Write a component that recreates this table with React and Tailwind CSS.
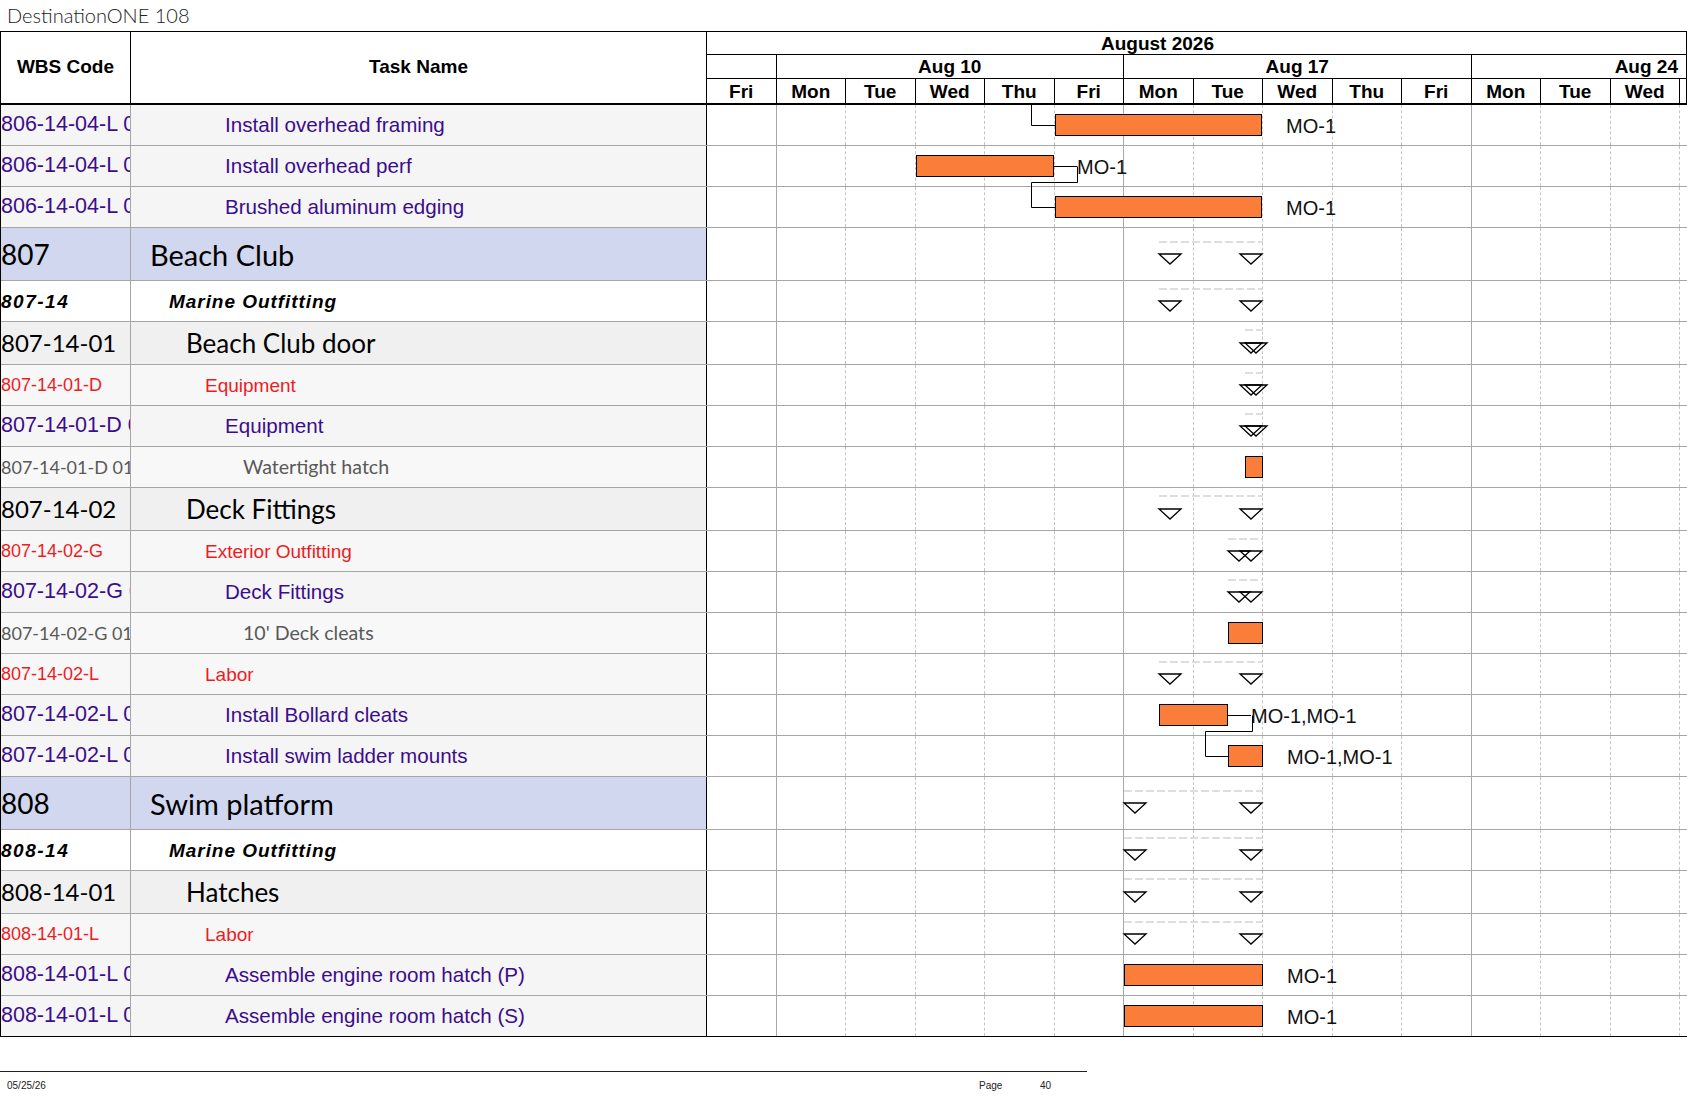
import React from 'react';

const DAYS = ['Fri', 'Mon', 'Tue', 'Wed', 'Thu', 'Fri', 'Mon', 'Tue', 'Wed', 'Thu', 'Fri', 'Mon', 'Tue', 'Wed'];
const WEEK_END = [0, 5, 10];

const LEVEL = {
  1: {
    row: 'h-[53px] bg-[#d0d7ee]',
    wbs: "font-['Lato'] text-[28px] text-black",
    name: "pl-[19px] font-['Lato'] text-[29px] text-black",
  },
  2: {
    row: 'h-[41px] bg-white',
    wbs: "font-['Liberation_Sans'] font-bold italic text-[19px] tracking-[0.08em] text-black",
    name: "pl-[38px] font-['Liberation_Sans'] font-bold italic text-[19px] tracking-[0.05em] text-black",
  },
  3: {
    row: 'h-[43px] bg-[#f0f0f0]',
    wbs: "font-['Lato'] text-[24px] text-black",
    name: "pl-[55px] font-['Lato'] text-[26px] text-black",
  },
  4: {
    row: 'h-[41px] bg-[#f7f7f7]',
    wbs: "font-['Liberation_Sans'] text-[18px] text-[#ec1c24]",
    name: "pl-[74px] font-['Liberation_Sans'] text-[19px] text-[#ec1c24]",
  },
  5: {
    row: 'h-[41px] bg-[#f5f5f5]',
    wbs: "font-['Liberation_Sans'] text-[21.5px] text-[#3b0d8c]",
    name: "pl-[94px] font-['Liberation_Sans'] text-[20.6px] text-[#3b0d8c]",
  },
  6: {
    row: 'h-[41px] bg-[#f8f8f8]',
    wbs: "font-['Lato'] text-[18px] text-[#595959]",
    name: "pl-[112px] font-['Lato'] text-[19.6px] text-[#595959]",
  },
};

// bar / sum values are x offsets measured from the chart's left border
const ROWS = [
  { lvl: 5, wbs: '806-14-04-L 01', name: 'Install overhead framing', bar: [348, 555], label: 'MO-1' },
  { lvl: 5, wbs: '806-14-04-L 02', name: 'Install overhead perf', bar: [209, 347], label: 'MO-1', tight: true },
  { lvl: 5, wbs: '806-14-04-L 03', name: 'Brushed aluminum edging', bar: [348, 555], label: 'MO-1' },
  { lvl: 1, wbs: '807', name: 'Beach Club', sum: [452, 556] },
  { lvl: 2, wbs: '807-14', name: 'Marine Outfitting', sum: [452, 556] },
  { lvl: 3, wbs: '807-14-01', name: 'Beach Club door', sum: [538, 556] },
  { lvl: 4, wbs: '807-14-01-D', name: 'Equipment', sum: [538, 556] },
  { lvl: 5, wbs: '807-14-01-D 01', name: 'Equipment', sum: [538, 556] },
  { lvl: 6, wbs: '807-14-01-D 01.01', name: 'Watertight hatch', bar: [538, 556] },
  { lvl: 3, wbs: '807-14-02', name: 'Deck Fittings', sum: [452, 556] },
  { lvl: 4, wbs: '807-14-02-G', name: 'Exterior Outfitting', sum: [521, 556] },
  { lvl: 5, wbs: '807-14-02-G 01', name: 'Deck Fittings', sum: [521, 556] },
  { lvl: 6, wbs: '807-14-02-G 01.01', name: "10' Deck cleats", bar: [521, 556] },
  { lvl: 4, wbs: '807-14-02-L', name: 'Labor', sum: [452, 556] },
  { lvl: 5, wbs: '807-14-02-L 01', name: 'Install Bollard cleats', bar: [452, 521], label: 'MO-1,MO-1', tight: true },
  { lvl: 5, wbs: '807-14-02-L 02', name: 'Install swim ladder mounts', bar: [521, 556], label: 'MO-1,MO-1' },
  { lvl: 1, wbs: '808', name: 'Swim platform', sum: [417, 556] },
  { lvl: 2, wbs: '808-14', name: 'Marine Outfitting', sum: [417, 556] },
  { lvl: 3, wbs: '808-14-01', name: 'Hatches', sum: [417, 556] },
  { lvl: 4, wbs: '808-14-01-L', name: 'Labor', sum: [417, 556] },
  { lvl: 5, wbs: '808-14-01-L 01', name: 'Assemble engine room hatch (P)', bar: [417, 556], label: 'MO-1' },
  { lvl: 5, wbs: '808-14-01-L 02', name: 'Assemble engine room hatch (S)', bar: [417, 556], label: 'MO-1' },
];

const HEIGHT = { 1: 53, 3: 43 };

function Triangle({ x, y }) {
  return <polygon points={`${x},${y} ${x + 22},${y} ${x + 11},${y + 10}`} fill="none" stroke="#000" strokeWidth="1.3" />;
}

function ChartOverlay() {
  let top = 0;
  const items = [];
  ROWS.forEach((r, i) => {
    const h = HEIGHT[r.lvl] || 41;
    const mid = top + 20.5;
    if (r.bar) {
      const [a, b] = r.bar;
      items.push(<rect key={`b${i}`} x={a + 0.5} y={top + 9.5} width={b - a - 1} height={21} fill="#fb7d3a" stroke="#000" strokeWidth="1" />);
      const lx = r.tight ? b + 23 : b + 24;
      if (r.tight) {
        items.push(<line key={`t${i}`} x1={b} y1={mid} x2={lx} y2={mid} stroke="#000" strokeWidth="1" />);
      }
      items.push(
        <text key={`l${i}`} x={lx} y={mid + 7} fontFamily="'Liberation Sans', Arial, sans-serif" fontSize="20" fill="#111">
          {r.label}
        </text>
      );
    }
    if (r.sum) {
      const [a, b] = r.sum;
      const dy = h === 53 ? 14 : 8;
      const ty = h === 53 ? 26 : h === 43 ? 21 : 20;
      items.push(<line key={`d${i}`} x1={a} y1={top + dy} x2={b} y2={top + dy} stroke="#d4d4d4" strokeWidth="1.6" strokeDasharray="8 3" />);
      items.push(<Triangle key={`e${i}`} x={b - 23} y={top + ty} />);
      items.push(<Triangle key={`s${i}`} x={a} y={top + ty} />);
    }
    top += h;
  });

  return (
    <svg className="absolute left-[706px] top-0 pointer-events-none" width="981" height="932">
      {items}
      {/* dependency links */}
      <polyline points="324.5,0 324.5,20.5 348,20.5" fill="none" stroke="#000" strokeWidth="1" />
      <polyline points="370.5,61.5 370.5,77.5 324.5,77.5 324.5,102.5 348,102.5" fill="none" stroke="#000" strokeWidth="1" />
      <polyline points="545.5,610.5 545.5,626.5 498.5,626.5 498.5,651.5 521,651.5" fill="none" stroke="#000" strokeWidth="1" />
    </svg>
  );
}

function DayGrid() {
  return (
    <div className="flex-1 grid grid-cols-[repeat(14,69.5px)_1fr] h-full">
      {DAYS.map((d, i) => (
        <div
          key={i}
          className={WEEK_END.includes(i) ? 'border-r border-[#a8a8a8]' : 'border-r border-dashed border-[#c4c4c4]'}
        />
      ))}
      <div />
    </div>
  );
}

function Row({ r, last }) {
  const s = LEVEL[r.lvl];
  return (
    <div className={`flex border-b ${last ? 'border-black' : 'border-[#a6a6a6]'} ${s.row}`}>
      <div className={`w-[130px] shrink-0 border-r border-[#a6a6a6] flex items-center overflow-hidden whitespace-nowrap leading-none ${s.wbs}`}>
        {r.wbs}
      </div>
      <div className={`w-[576px] shrink-0 border-r border-black flex items-center overflow-hidden whitespace-nowrap leading-none ${s.name}`}>
        {r.name}
      </div>
      <div className="flex-1 flex bg-white h-full">
        <DayGrid />
      </div>
    </div>
  );
}

export default function App() {
  return (
    <div className="w-[1687px] h-[1097px] bg-white overflow-hidden font-['Liberation_Sans',Arial,sans-serif]">
      <div className="h-[31px] pl-[7px] leading-[31px] text-[20px] text-[#222] font-['Lato',sans-serif] font-light">
        DestinationONE 108
      </div>

      <div className="border-l border-t border-black">
        {/* header */}
        <div className="flex h-[73px] border-b-2 border-black">
          <div className="w-[130px] shrink-0 border-r border-black flex items-center justify-center text-[19px] font-bold text-black">
            WBS Code
          </div>
          <div className="w-[576px] shrink-0 border-r border-black flex items-center justify-center text-[19px] font-bold text-black">
            Task Name
          </div>
          <div className="flex-1 flex flex-col border-r border-black text-[19px] font-bold text-black leading-none">
            <div className="h-[23px] border-b border-black flex items-center pl-[394px]">August 2026</div>
            <div className="h-[24px] border-b border-black grid grid-cols-[69.5px_347.5px_347.5px_1fr]">
              <div className="border-r border-black" />
              <div className="border-r border-black flex items-center justify-center">Aug 10</div>
              <div className="border-r border-black flex items-center justify-center">Aug 17</div>
              <div className="flex items-center justify-end pr-[8px]">Aug 24</div>
            </div>
            <div className="flex-1 grid grid-cols-[repeat(14,69.5px)_1fr]">
              {DAYS.map((d, i) => (
                <div key={i} className="border-r border-black flex items-center justify-center">
                  {d}
                </div>
              ))}
              <div />
            </div>
          </div>
        </div>

        {/* body */}
        <div className="relative">
          {ROWS.map((r, i) => (
            <Row key={i} r={r} last={i === ROWS.length - 1} />
          ))}
          <ChartOverlay />
        </div>
      </div>

      <div className="mt-[34px] w-[1087px] border-t border-[#222] h-[27px] flex items-center pl-[7px] text-[10px] text-[#222]">
        <span className="w-[972px]">05/25/26</span>
        <span className="w-[61px]">Page</span>
        <span>40</span>
      </div>
    </div>
  );
}
